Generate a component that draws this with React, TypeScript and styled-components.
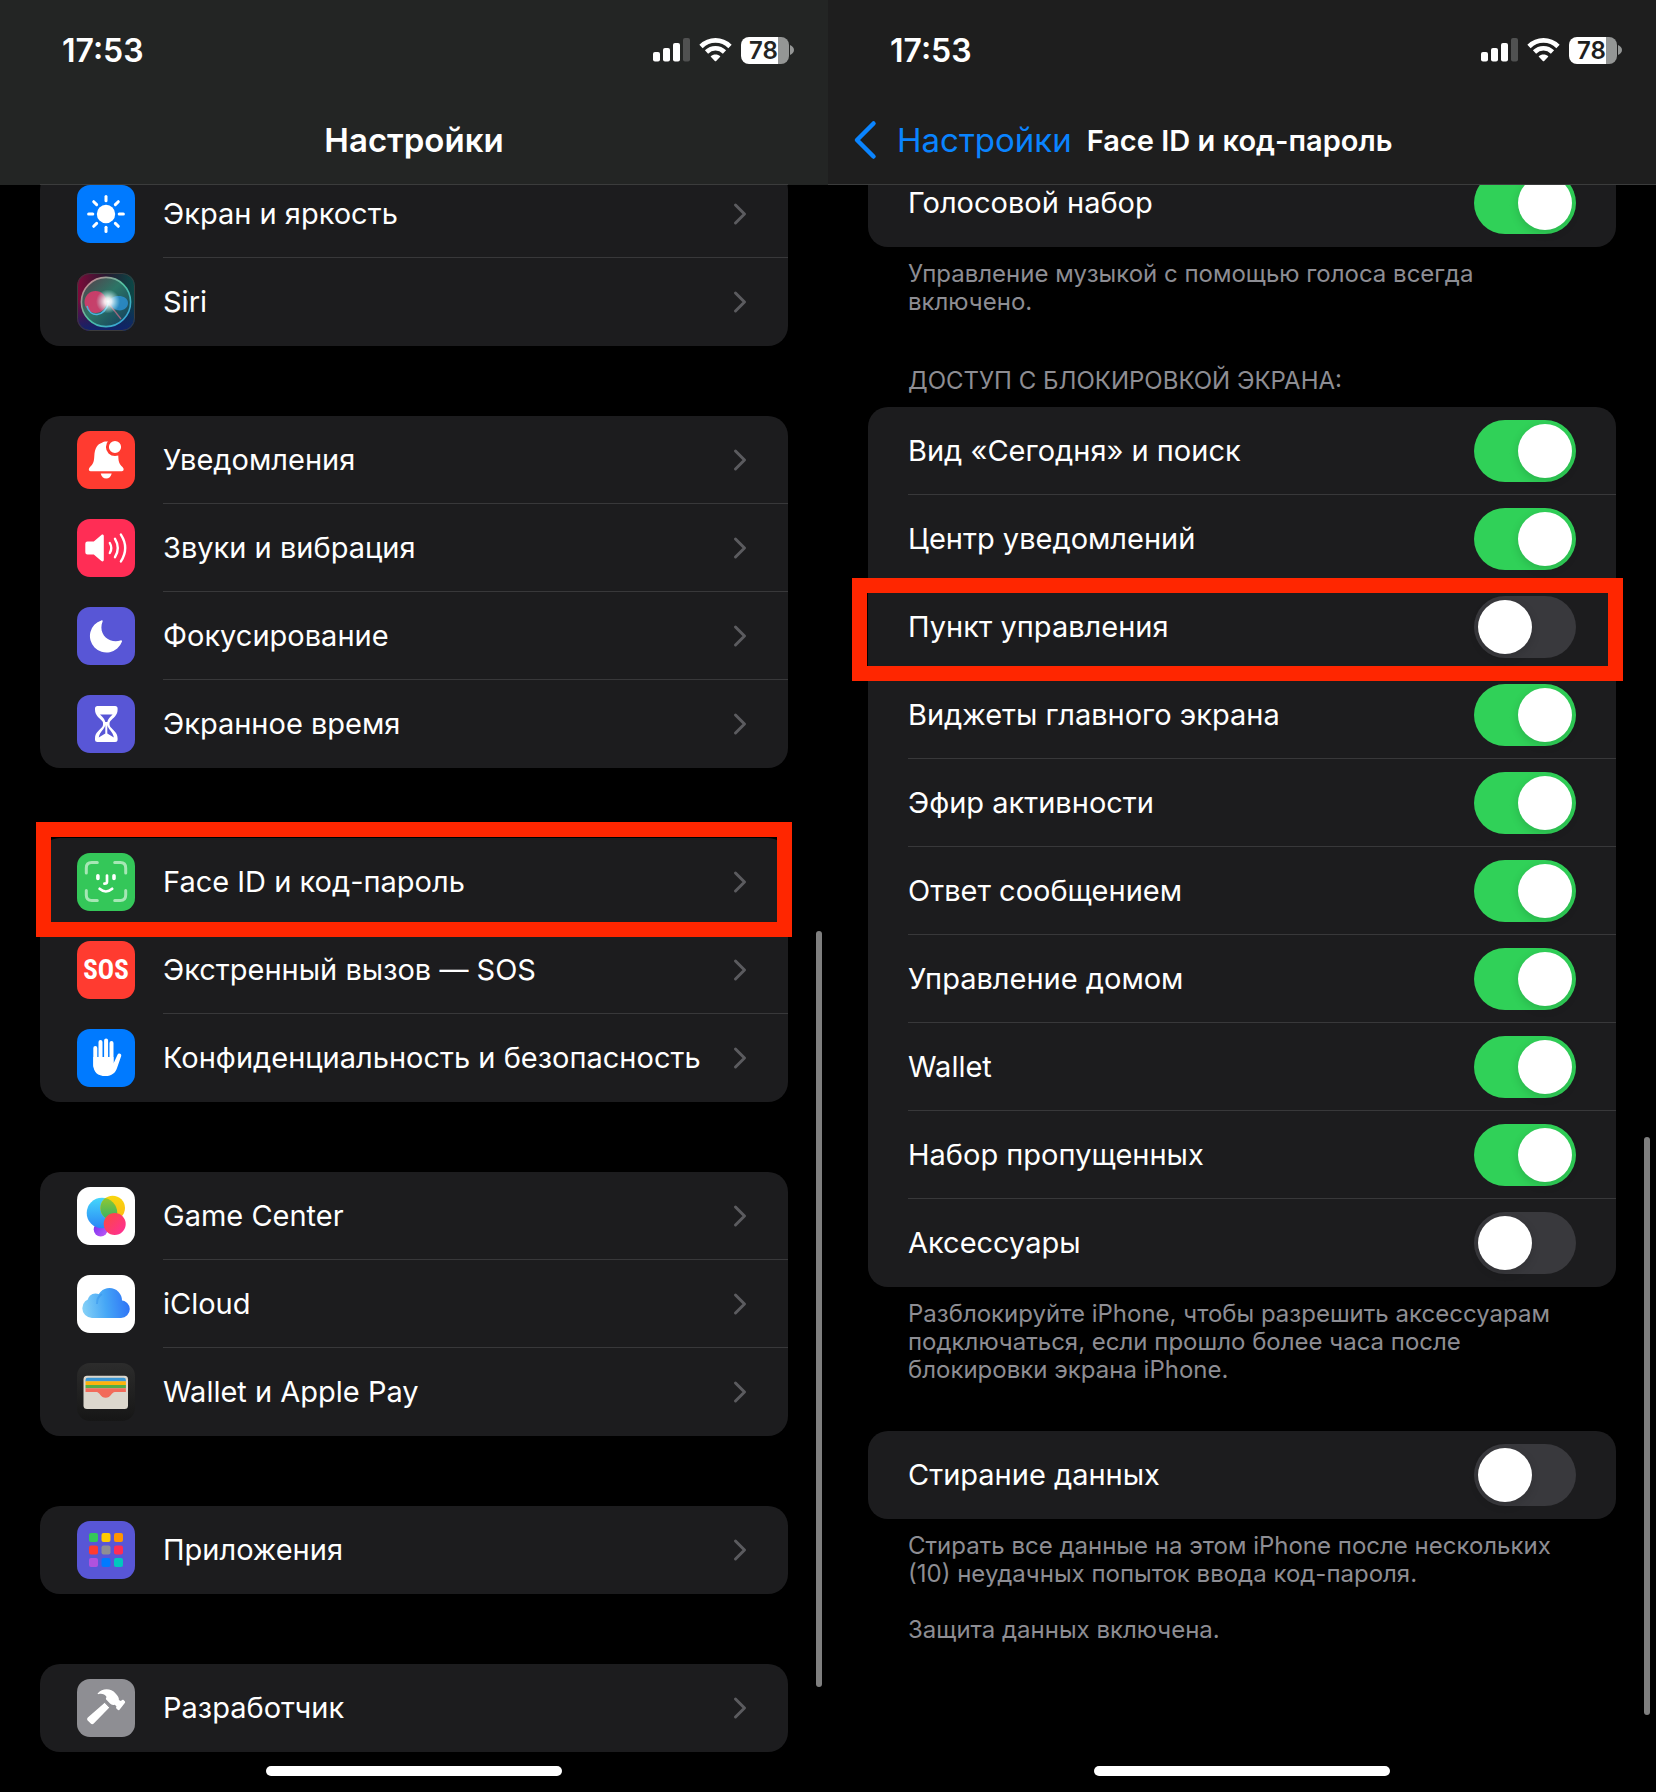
import React, { useId, useState } from "react";
import styled, { createGlobalStyle, css } from "styled-components";

const GlobalStyle = createGlobalStyle`
  *, *::before, *::after { box-sizing: border-box; }
  body {
    margin: 0;
    background: #000;
    color: #fff;
    font-family: Inter, "Noto Sans", sans-serif;
  }
`;

const ROW_HEIGHT = 88;

const Page = styled.div`
  display: grid;
  grid-template-columns: 1fr 1fr;
  min-height: 100vh;
`;

const Screen = styled.section`
  position: relative;
  display: flex;
  flex-direction: column;
  min-width: 0;
  background: #000;
`;

const Header = styled.header<{ $tone: string; $lineInset: number }>`
  position: relative;
  height: 185px;
  background: ${(p) => p.$tone};

  &::after {
    content: "";
    position: absolute;
    bottom: 0;
    left: ${(p) => p.$lineInset}px;
    right: ${(p) => p.$lineInset}px;
    height: 1px;
    background: #3b3c3c;
  }
`;

const StatusBar = styled.div`
  display: flex;
  align-items: center;
  justify-content: space-between;
  height: 100px;
  padding: 0 34px 0 62px;
`;

const Clock = styled.time`
  padding-top: 2px;
  font-size: 32px;
  font-weight: 600;
  line-height: 40px;
`;

const StatusIcons = styled.div`
  display: flex;
  align-items: center;
  gap: 9px;
`;

const Battery = styled.div`
  display: flex;
  align-items: center;
  gap: 1px;
`;

const BatteryBody = styled.div<{ $ink: string }>`
  width: 48px;
  height: 27px;
  padding-left: 8px;
  border-radius: 8px;
  background: linear-gradient(90deg, #fff 37px, #949695 37px);
  color: ${(p) => p.$ink};
  font-size: 24px;
  font-weight: 600;
  line-height: 27px;
`;

const NavBar = styled.nav<{ $centered?: boolean }>`
  display: flex;
  align-items: center;
  justify-content: ${(p) => (p.$centered ? "center" : "flex-start")};
  gap: 15px;
  height: 80px;
  padding: 0 25px;
  white-space: nowrap;
`;

const Title = styled.h1<{ $small?: boolean }>`
  margin: 0;
  padding-top: ${(p) => (p.$small ? 2 : 0)}px;
  font-size: ${(p) => (p.$small ? 29 : 33)}px;
  font-weight: 600;
  line-height: 40px;
`;

const BackLink = styled.a`
  display: flex;
  align-items: center;
  gap: 20px;
  color: #0a84ff;
  font-size: 33px;
  line-height: 40px;
  text-decoration: none;
`;

const Content = styled.main`
  flex: 1;
  overflow: hidden;
  padding: 0 40px 40px;
`;

const Groups = styled.div<{ $scrolled: number }>`
  display: flex;
  flex-direction: column;
  gap: 70px;
  margin-top: -${(p) => p.$scrolled}px;
`;

const Card = styled.ul`
  margin: 0;
  padding: 0;
  list-style: none;
  border-radius: 20px;
  background: #1c1c1e;
`;

const Item = styled.li`
  position: relative;
`;

const rowBody = css`
  display: flex;
  flex: 1;
  align-items: center;
  justify-content: space-between;
  min-width: 0;
  height: ${ROW_HEIGHT}px;
  padding: 1px 40px 0 0;
  border-bottom: 1px solid #38383a;
  font-size: 29px;
  line-height: 40px;
  white-space: nowrap;

  ${Item}:last-child & {
    border-bottom-color: transparent;
  }
`;

const LinkRow = styled.a`
  display: flex;
  align-items: center;
  gap: 28px;
  padding-left: 37px;
  color: #fff;
  text-decoration: none;
`;

const LinkBody = styled.span`
  ${rowBody}
`;

const SwitchRow = styled.div`
  display: flex;
  padding-left: 40px;
`;

const SwitchBody = styled.label`
  ${rowBody}
`;

const Switch = styled.input`
  appearance: none;
  flex: none;
  display: flex;
  align-items: center;
  width: 102px;
  height: 62px;
  margin: 0;
  padding: 0 4px;
  border-radius: 31px;
  background: #39393d;

  &::before {
    content: "";
    width: 54px;
    height: 54px;
    border-radius: 50%;
    background: #fff;
    box-shadow: 0 3px 10px rgba(0, 0, 0, 0.15);
  }

  &:checked {
    justify-content: flex-end;
    background: #30d158;
  }
`;

const Highlight = styled.span<{ $inset: string }>`
  position: absolute;
  inset: ${(p) => p.$inset};
  z-index: 1;
  border: 15px solid #ff2600;
  pointer-events: none;
`;

const SectionTitle = styled.h2`
  margin: 0;
  padding: 0 40px 12px;
  color: #8d8d93;
  font-size: 24px;
  font-weight: 400;
  line-height: 28px;
`;

const Note = styled.p`
  margin: 0;
  padding: 13px 40px 0;
  color: #8d8d93;
  font-size: 24px;
  line-height: 28px;
  white-space: pre-line;
`;

const SwitchGroups = styled(Groups)`
  gap: 47px;
`;

const SwitchGroup = styled.div`
  min-width: 0;
`;

const LaterSwitchGroup = styled(SwitchGroup)`
  padding-top: 4px;
`;

const ScrollThumb = styled.span<{ $top: string; $bottom: string }>`
  position: absolute;
  top: ${(p) => p.$top};
  bottom: ${(p) => p.$bottom};
  right: 6px;
  width: 6px;
  border-radius: 3px;
  background: #7f7f7f;
`;

const HomeIndicator = styled.span`
  position: absolute;
  bottom: 16px;
  left: 50%;
  width: 296px;
  height: 10px;
  margin-left: -148px;
  border-radius: 5px;
  background: #fff;
`;

const Tile = styled.span<{ $fill: string }>`
  display: flex;
  flex: none;
  align-items: center;
  justify-content: center;
  width: 58px;
  height: 58px;
  border-radius: 13px;
  overflow: hidden;
  background: ${(p) => p.$fill};

  svg { display: block; }
`;

const SosText = styled.span`
  font-family: "Liberation Sans Narrow", "Roboto Condensed", Roboto, sans-serif;
  font-size: 27px;
  font-weight: 700;
  line-height: 58px;
`;

const Glyph = ({ children }: { children: React.ReactNode }) => (
  <svg width="58" height="58" viewBox="0 0 58 58" fill="none" aria-hidden="true">
    {children}
  </svg>
);

const SunIcon = () => (
  <Glyph>
    <circle cx="29" cy="29" r="9.2" fill="#fff" />
    {[0, 45, 90, 135, 180, 225, 270, 315].map((a) => (
      <path key={a} d="M29 11.6v4.2" stroke="#fff" strokeWidth="3" strokeLinecap="round" transform={`rotate(${a} 29 29)`} />
    ))}
  </Glyph>
);

const SiriIcon = () => (
  <Glyph>
    <defs>
      <linearGradient id="siriL" x1="0" y1="0" x2="1" y2="0">
        <stop offset="0" stopColor="#800a3a" />
        <stop offset=".5" stopColor="#26182f" />
        <stop offset="1" stopColor="#0a4a48" />
      </linearGradient>
      <linearGradient id="siriD" x1="0" y1="0" x2="0" y2="1">
        <stop offset=".45" stopColor="#0a1c60" stopOpacity="0" />
        <stop offset="1" stopColor="#10246e" />
      </linearGradient>
      <linearGradient id="siriR" x1="0" y1="0" x2="1" y2="1">
        <stop offset="0" stopColor="#e0788c" />
        <stop offset=".5" stopColor="#4fc3a0" />
        <stop offset="1" stopColor="#2f9be6" />
      </linearGradient>
      <linearGradient id="siriB" x1="0" y1="0" x2="1" y2="1">
        <stop offset="0" stopColor="#5a3a48" />
        <stop offset=".45" stopColor="#2c7566" />
        <stop offset="1" stopColor="#123a5c" />
      </linearGradient>
      <radialGradient id="siriG">
        <stop offset="0" stopColor="#fff" />
        <stop offset=".3" stopColor="#fff" stopOpacity=".85" />
        <stop offset="1" stopColor="#bff" stopOpacity="0" />
      </radialGradient>
    </defs>
    <rect width="58" height="58" fill="url(#siriL)" />
    <rect width="58" height="58" fill="url(#siriD)" />
    <circle cx="29" cy="29" r="24.6" fill="url(#siriB)" stroke="url(#siriR)" strokeWidth="1.6" />
    <circle cx="18.5" cy="29" r="11" fill="#e0386c" fillOpacity=".85" />
    <path d="M10 33c3 12 17 12 22-4" stroke="#4bb4e0" strokeWidth="1.5" />
    <path d="M31 29c5-9 20-7 20 1s-13 12-20-1z" fill="#2c8ed0" fillOpacity=".85" />
    <path d="M32 31l12 15" stroke="#d0708c" strokeOpacity=".7" strokeWidth="1.3" />
    <circle cx="31" cy="28.5" r="12" fill="url(#siriG)" />
    <rect x=".5" y=".5" width="57" height="57" rx="12.5" stroke="#3c3c3e" />
  </Glyph>
);

const BellIcon = () => (
  <Glyph>
    <path d="M13.6 40.2c-2.2 0-2.2-2.6-.6-4.2 3.8-3.6 4-6 4.3-11 .5-8 3-11.6 7.7-13.2 2-1.8 6.5-1.8 8.5 0C38.2 13.4 41 17 41.3 25c.2 5 .4 7.4 4.2 11 1.6 1.6 1.6 4.2-.6 4.2z" fill="#fff" />
    <path d="M23.700 42.400h11c-.6 3-2.800 5-5.500 5s-4.900-2-5.500-5z" fill="#fff" />
    <circle cx="38" cy="16" r="7.600" fill="#fff" stroke="#ff3b30" strokeWidth="3" />
  </Glyph>
);

const SpeakerIcon = () => (
  <Glyph>
    <path d="M10.500 22.500h6.300l7.600-6.600c1-.9 2.400-.4 2.400 1v24.200c0 1.400-1.400 1.900-2.400 1l-7.600-6.600h-6.300q-2.200 0-2.200-2.200v-8.600q0-2.200 2.200-2.200z" fill="#fff" />
    <path d="M32.800 24q3 5 0 10M38 19.800q5.600 9.200 0 18.400M43.900 15.600q8.600 13.400 0 26.800" stroke="#fff" strokeWidth="2.400" strokeLinecap="round" />
  </Glyph>
);

const MoonIcon = () => (
  <Glyph>
    <path d="M24.300 13.400A16.500 16.500 0 1 0 44.900 34.800c.4-1.200-.4-1.700-1.500-1.300C32.500 37.200 20.500 27 25.600 14.500c.4-1-.2-1.500-1.300-1.100z" fill="#fff" />
  </Glyph>
);

const HourglassIcon = () => (
  <Glyph>
    <path
      fillRule="evenodd"
      d="M20.500 11h17.600q2.500 0 2.500 2.500v1.300c0 5.700-4.600 8.300-7.200 11.300-1.200 1.500-1.200 4.300 0 5.800 2.600 3 7.200 5.600 7.200 11.300v1.300q0 2.500-2.500 2.500H20.500q-2.500 0-2.500-2.500v-1.300c0-5.700 4.600-8.300 7.200-11.300 1.200-1.500 1.200-4.300 0-5.800-2.600-3-7.200-5.600-7.200-11.300v-1.300q0-2.500 2.500-2.500zM23 19.500c3 3 4.700 4.500 5.300 7.500h2c.6-3 2.300-4.500 5.300-7.500zM28.300 30c-.6 4-5.500 6.500-6.600 12.500l6.600-4zM30.300 30v8.500l6.600 4c-1.100-6-6-8.500-6.600-12.500z"
      fill="#fff"
    />
  </Glyph>
);

const FaceIcon = () => (
  <Glyph>
    <path d="M9.300 20v-5q0-5.400 5.400-5.400h5.600M37.700 9.600h5.600q5.400 0 5.400 5.400v5M48.700 37.500v4.600q0 5.400-5.400 5.400h-5.600M20.300 47.500h-5.600q-5.400 0-5.400-5.400v-4.600" stroke="#a6e7b5" strokeWidth="3" strokeLinecap="round" />
    <path d="M20.900 22.800v2.700M37 22.800v2.700" stroke="#fff" strokeWidth="3.600" strokeLinecap="round" />
    <path d="M30 22.500v6.300q0 1.900-2.600 1.900M22.600 35.800c3.800 3.400 8.800 3.400 12.600 0" stroke="#fff" strokeWidth="2.700" strokeLinecap="round" />
  </Glyph>
);

const HandIcon = () => (
  <Glyph>
    <path d="M18.300 19v18M23.500 13v20M29.100 11.500V33M34.500 14v22" stroke="#fff" strokeWidth="4" strokeLinecap="round" />
    <path d="M16.300 28h20.200v6.500l4-8.800c.9-2 4.400-1.300 3.700 1.300l-4 11.500c-1.800 5.500-5.500 8.600-11.600 8.600-7.900 0-12.300-4-12.300-11.600z" fill="#fff" />
  </Glyph>
);

const GameCenterIcon = () => (
  <Glyph>
    <defs>
      <linearGradient id="gcB" x1="0" y1="0" x2="0" y2="1"><stop stopColor="#45d7fb" /><stop offset="1" stopColor="#2a86f5" /></linearGradient>
      <linearGradient id="gcY" x1="0" y1="0" x2="0" y2="1"><stop stopColor="#f8d60f" /><stop offset="1" stopColor="#fcb916" /></linearGradient>
      <linearGradient id="gcG" x1="0" y1="0" x2="0" y2="1"><stop stopColor="#9cc92a" /><stop offset="1" stopColor="#2fb16b" /></linearGradient>
      <linearGradient id="gcR" x1="0" y1="0" x2="1" y2="1"><stop stopColor="#fb4a3d" /><stop offset="1" stopColor="#ff2d9b" /></linearGradient>
      <linearGradient id="gcP" x1="0" y1="0" x2="1" y2="1"><stop stopColor="#6f2df0" /><stop offset="1" stopColor="#c45cf5" /></linearGradient>
      <clipPath id="gcClip"><circle cx="25" cy="26" r="15.300" /></clipPath>
    </defs>
    <circle cx="23.700" cy="42.500" r="7" fill="url(#gcP)" />
    <circle cx="25" cy="26" r="15.300" fill="url(#gcB)" />
    <circle cx="35.700" cy="21" r="12.300" fill="url(#gcY)" />
    <circle cx="35.700" cy="21" r="12.300" fill="url(#gcG)" clipPath="url(#gcClip)" />
    <circle cx="37.700" cy="37" r="11" fill="url(#gcR)" />
  </Glyph>
);

const CloudIcon = () => (
  <Glyph>
    <defs>
      <linearGradient id="icl" x1="6" y1="34" x2="52" y2="28" gradientUnits="userSpaceOnUse">
        <stop stopColor="#84d0f7" /><stop offset=".5" stopColor="#45a6f6" /><stop offset="1" stopColor="#2f74f6" />
      </linearGradient>
    </defs>
    <g fill="url(#icl)">
      <circle cx="32.500" cy="25.500" r="12.500" />
      <circle cx="18.500" cy="26.500" r="8" />
      <path d="M15 23.500a9.700 9.700 0 0 0 0 19.400h29a8.800 8.800 0 0 0 0-17.600L30 22z" />
    </g>
    <path d="M20 29c0-5 1.800-8 4.800-9.800" stroke="#2f8fe8" strokeOpacity=".45" strokeWidth="2" />
  </Glyph>
);

const WalletIcon = () => (
  <Glyph>
    <rect x="6.500" y="12.700" width="44.500" height="33.300" rx="3.500" fill="#dcd7cd" />
    <path d="M8.500 18.500v-1.500q0-2.200 2.200-2.200h36q2.200 0 2.200 2.200v1.500z" fill="#3c97d3" />
    <path d="M8.500 18.300h40.400v3.900H8.500z" fill="#fdb20c" />
    <path d="M8.500 22h40.400v3.200H8.500z" fill="#52ad47" />
    <path d="M8.500 25.200h40.400v3.700h-11c-3.300 0-4 5.800-9.200 5.800s-5.900-5.800-9.200-5.800h-11z" fill="#f26b5a" />
  </Glyph>
);

const APP_COLOURS = ["#34c759", "#ffcc00", "#ff9500", "#ff3b30", "#8e8e93", "#ff2d55", "#af52de", "#007aff", "#00c7be"];

const AppsIcon = () => (
  <Glyph>
    {APP_COLOURS.map((c, i) => (
      <rect key={c} x={12 + (i % 3) * 12.5} y={12 + Math.floor(i / 3) * 12.5} width="9" height="9" rx="2" fill={c} />
    ))}
  </Glyph>
);

const HammerIcon = () => (
  <Glyph>
    <path d="M28 23.500l4.600 4.800-15.600 16c-1.200 1.200-2.400 1.100-3.500 0l-2.600-2.600c-1.100-1.100-1-2.400.2-3.500z" fill="#fff" />
    <path d="M20.800 14.300c4.500-5.400 13.200-5.400 17.800.2 2.300 2.300 3.400 4 3.300 6.600l1.800.8 1.500-.9c.6-.4 1.100-.3 1.600.2l1 1.100c.5.600.4 1.100 0 1.600l-5.300 6.800c-.5.700-1.200.7-1.800.1l-1.300-1.400c-.5-.6-.3-1.200.1-2l-1.700-1.700c-2.400.5-3.600-.1-4.800-1.300l-3.600-3.600c-.8-1-.6-1.900.2-2.900-1.800-2.500-4.700-3.600-7.800-2.800-1 .2-1.500-.2-1-.8z" fill="#fff" />
    <path d="M27.500 23.200l5.600 5.800" stroke="#8e8e93" strokeWidth="1" />
  </Glyph>
);

const Chevron = () => (
  <svg width="16" height="24" viewBox="0 0 16 24" fill="none" aria-hidden="true">
    <path d="M3.500 3l9 9-9 9" stroke="#5b5b5f" strokeWidth="3" strokeLinecap="round" strokeLinejoin="round" />
  </svg>
);

const BackChevron = () => (
  <svg width="24" height="40" viewBox="0 0 24 40" fill="none" aria-hidden="true">
    <path d="M20.500 3.500L4 20l16.500 16.500" stroke="#0a84ff" strokeWidth="4.500" strokeLinecap="round" strokeLinejoin="round" />
  </svg>
);

const SignalIcon = () => (
  <svg width="37" height="24" viewBox="0 0 37 24" aria-hidden="true">
    <rect x="0" y="14" width="7" height="9.500" rx="2" fill="#fff" />
    <rect x="10" y="10" width="7" height="13.500" rx="2" fill="#fff" />
    <rect x="20" y="5" width="7" height="18.500" rx="2" fill="#fff" />
    <rect x="30" y="0" width="7" height="23.500" rx="2" fill="#505151" />
  </svg>
);

const WifiIcon = () => (
  <svg width="33" height="24" viewBox="0 0 33 24" fill="none" aria-hidden="true">
    <path d="M2 8.400C10.400.4 22.600.4 31 8.400" stroke="#fff" strokeWidth="4.800" />
    <path d="M7.500 14c5.200-5 12.800-5 18 0" stroke="#fff" strokeWidth="4.600" />
    <path d="M11.600 18.500c2.900-2.600 6.900-2.600 9.800 0l-4.200 4.500q-.7.700-1.400 0z" fill="#fff" />
  </svg>
);

const Status = ({ ink }: { ink: string }) => (
  <StatusBar>
    <Clock>17:53</Clock>
    <StatusIcons>
      <SignalIcon />
      <WifiIcon />
      <Battery>
        <BatteryBody $ink={ink}>78</BatteryBody>
        <svg width="4" height="10" viewBox="0 0 4 10" aria-hidden="true">
          <path d="M0 0q4 2 4 5t-4 5z" fill="#949695" />
        </svg>
      </Battery>
    </StatusIcons>
  </StatusBar>
);

type Entry = { label: string; fill: string; icon: React.ReactNode; marked?: boolean };

const SETTINGS: Entry[][] = [
  [
    { label: "Экран и яркость", fill: "#007aff", icon: <SunIcon /> },
    { label: "Siri", fill: "#1c1c1e", icon: <SiriIcon /> },
  ],
  [
    { label: "Уведомления", fill: "#ff3b30", icon: <BellIcon /> },
    { label: "Звуки и вибрация", fill: "#ff2d55", icon: <SpeakerIcon /> },
    { label: "Фокусирование", fill: "#5856d6", icon: <MoonIcon /> },
    { label: "Экранное время", fill: "#5856d6", icon: <HourglassIcon /> },
  ],
  [
    { label: "Face ID и код-пароль", fill: "#34c759", icon: <FaceIcon />, marked: true },
    { label: "Экстренный вызов — SOS", fill: "#ff3b30", icon: <SosText aria-hidden="true">SOS</SosText> },
    { label: "Конфиденциальность и безопасность", fill: "#007aff", icon: <HandIcon /> },
  ],
  [
    { label: "Game Center", fill: "#fff", icon: <GameCenterIcon /> },
    { label: "iCloud", fill: "#fff", icon: <CloudIcon /> },
    { label: "Wallet и Apple Pay", fill: "linear-gradient(#2c2c2c, #161616)", icon: <WalletIcon /> },
  ],
  [{ label: "Приложения", fill: "#5856d6", icon: <AppsIcon /> }],
  [{ label: "Разработчик", fill: "#8e8e93", icon: <HammerIcon /> }],
];

const LOCK_ACCESS: { label: string; on: boolean; marked?: boolean }[] = [
  { label: "Вид «Сегодня» и поиск", on: true },
  { label: "Центр уведомлений", on: true },
  { label: "Пункт управления", on: false, marked: true },
  { label: "Виджеты главного экрана", on: true },
  { label: "Эфир активности", on: true },
  { label: "Ответ сообщением", on: true },
  { label: "Управление домом", on: true },
  { label: "Wallet", on: true },
  { label: "Набор пропущенных", on: true },
  { label: "Аксессуары", on: false },
];

const Toggle = ({ label, on, marked }: { label: string; on: boolean; marked?: boolean }) => {
  const id = useId();
  const [checked, setChecked] = useState(on);
  return (
    <Item>
      <SwitchRow>
        <SwitchBody htmlFor={id}>
          {label}
          <Switch id={id} type="checkbox" role="switch" checked={checked} onChange={() => setChecked(!checked)} />
        </SwitchBody>
      </SwitchRow>
      {marked && <Highlight $inset="-5px -7px -10px -16px" />}
    </Item>
  );
};

export default function App() {
  return (
    <>
      <GlobalStyle />
      <Page>
        <Screen>
          <Header $tone="#232524" $lineInset={40}>
            <Status ink="#232524" />
            <NavBar $centered>
              <Title>Настройки</Title>
            </NavBar>
          </Header>
          <Content>
            <Groups $scrolled={15}>
              {SETTINGS.map((group) => (
                <Card key={group[0].label}>
                  {group.map((entry) => (
                    <Item key={entry.label}>
                      <LinkRow href="#">
                        <Tile $fill={entry.fill}>{entry.icon}</Tile>
                        <LinkBody>
                          {entry.label}
                          <Chevron />
                        </LinkBody>
                      </LinkRow>
                      {entry.marked && <Highlight $inset="-16px -4px -11px -4px" />}
                    </Item>
                  ))}
                </Card>
              ))}
            </Groups>
          </Content>
          <ScrollThumb $top="931px" $bottom="105px" />
          <HomeIndicator />
        </Screen>

        <Screen>
          <Header $tone="#1e1e1e" $lineInset={0}>
            <Status ink="#1e1e1e" />
            <NavBar>
              <BackLink href="#">
                <BackChevron />
                Настройки
              </BackLink>
              <Title $small>Face ID и код-пароль</Title>
            </NavBar>
          </Header>
          <Content>
            <SwitchGroups $scrolled={26}>
              <SwitchGroup>
                <Card>
                  <Toggle label="Голосовой набор" on />
                </Card>
                <Note>Управление музыкой с помощью голоса всегда включено.</Note>
              </SwitchGroup>
              <LaterSwitchGroup as="section">
                <SectionTitle>ДОСТУП С БЛОКИРОВКОЙ ЭКРАНА:</SectionTitle>
                <Card>
                  {LOCK_ACCESS.map((item) => (
                    <Toggle key={item.label} {...item} />
                  ))}
                </Card>
                <Note>
                  Разблокируйте iPhone, чтобы разрешить аксессуарам подключаться, если прошло более часа после блокировки экрана iPhone.
                </Note>
              </LaterSwitchGroup>
              <SwitchGroup>
                <Card>
                  <Toggle label="Стирание данных" on={false} />
                </Card>
                <Note>
                  {"Стирать все данные на этом iPhone после нескольких (10) неудачных попыток ввода код-пароля.\n\nЗащита данных включена."}
                </Note>
              </SwitchGroup>
            </SwitchGroups>
          </Content>
          <ScrollThumb $top="1137px" $bottom="77px" />
          <HomeIndicator />
        </Screen>
      </Page>
    </>
  );
}
